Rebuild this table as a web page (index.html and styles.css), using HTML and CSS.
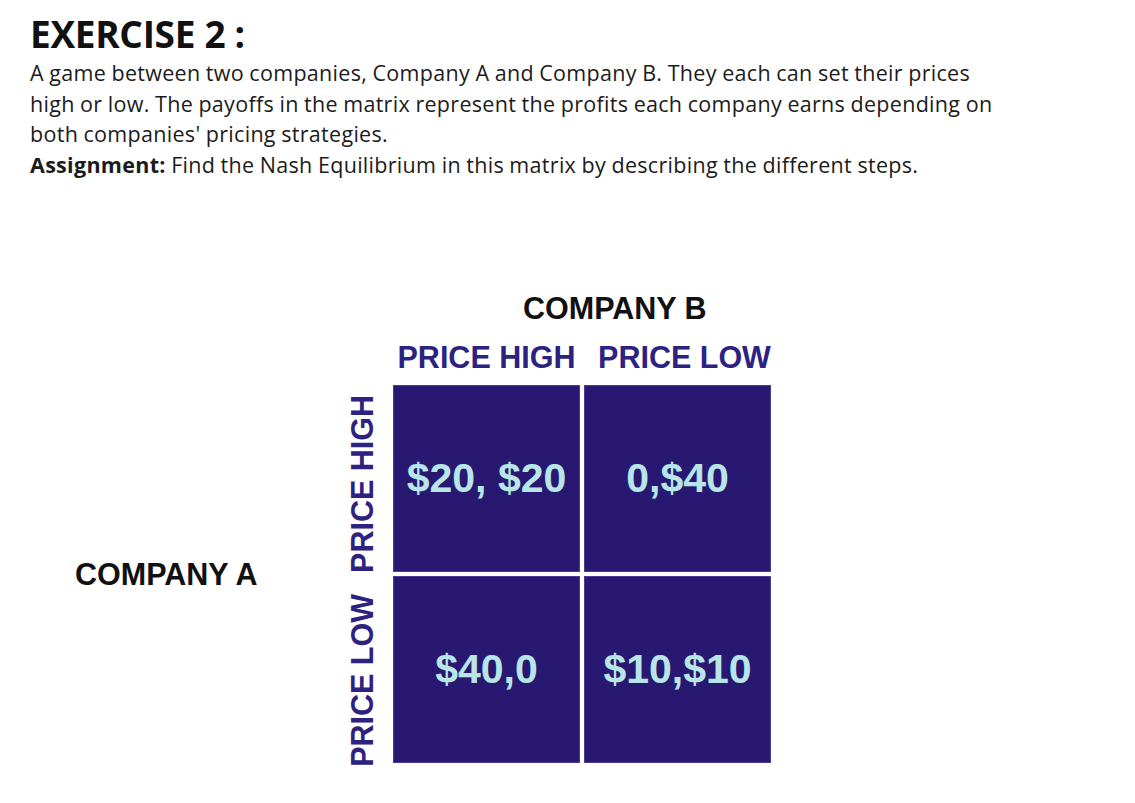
FILE: index.html
```html
<!DOCTYPE html>
<html lang="en">
<head>
<meta charset="utf-8">
<title>Exercise 2</title>
<link rel="stylesheet" href="styles.css">
</head>
<body>
<main class="page">
  <section class="intro">
    <h1 class="title">EXERCISE 2 :</h1>
    <p class="text">A game between two companies, Company A and Company B. They each can set their prices<br>high or low. The payoffs in the matrix represent the profits each company earns depending on<br>both companies' pricing strategies.<br><b>Assignment:</b> Find the Nash Equilibrium in this matrix by describing the different steps.</p>
  </section>

  <section class="game">
    <div class="player-b">COMPANY B</div>
    <div class="col-heads">
      <div class="col-head">PRICE HIGH</div>
      <div class="col-head">PRICE LOW</div>
    </div>
    <div class="player-a">COMPANY A</div>
    <div class="row-heads">
      <div class="row-head row-head-high"><span>PRICE HIGH</span></div>
      <div class="row-head row-head-low"><span>PRICE LOW</span></div>
    </div>
    <div class="matrix">
      <div class="cell">$20, $20</div>
      <div class="cell">0,$40</div>
      <div class="cell">$40,0</div>
      <div class="cell">$10,$10</div>
    </div>
  </section>
</main>
</body>
</html>
```

FILE: styles.css
```css
html, body {
  margin: 0;
  padding: 0;
  background: #ffffff;
}

.page {
  width: 1135px;
  height: 803px;
  overflow: hidden;
}

.intro {
  padding: 12px 0 0 30px;
  color: #1b1b1b;
  font-family: "Open Sans", "Noto Sans", sans-serif;
}

.title {
  margin: 0;
  font-size: 37px;
  line-height: 44px;
  font-weight: 700;
  letter-spacing: -0.3px;
  color: #111;
}

.text {
  margin: 2px 0 0;
  font-size: 21.5px;
  line-height: 30.5px;
  letter-spacing: 0.3px;
  word-spacing: -0.5px;
}

.text b {
  font-weight: 700;
}

.game {
  display: grid;
  grid-template-columns: 268px 50px 378px;
  grid-template-rows: 44px 55px 378px;
  margin: 106px 0 0 75px;
  font-family: "Liberation Sans", Arial, sans-serif;
  font-weight: 700;
}

.player-b {
  grid-column: 3;
  grid-row: 1;
  font-size: 30.5px;
  line-height: 44px;
  color: #111;
  padding-left: 130px;
  white-space: nowrap;
}

.col-heads {
  grid-column: 3;
  grid-row: 2;
  display: grid;
  grid-template-columns: 187px 187px;
  column-gap: 4px;
  align-items: center;
  padding-bottom: 2px;
}

.col-head {
  font-size: 30.5px;
  line-height: 40px;
  color: #2d2280;
  text-align: center;
  white-space: nowrap;
}

.col-head + .col-head {
  padding-left: 14px;
}

.player-a {
  grid-column: 1;
  grid-row: 3;
  align-self: center;
  font-size: 30.5px;
  line-height: 40px;
  color: #111;
  white-space: nowrap;
}

.row-heads {
  grid-column: 2;
  grid-row: 3;
  display: grid;
  grid-template-rows: 187px 187px;
  row-gap: 4px;
  padding-right: 12px;
}

.row-head {
  display: flex;
  align-items: center;
  justify-content: center;
}

.row-head-high {
  padding-top: 10px;
}

.row-head-low {
  padding-top: 22px;
}

.row-head span {
  writing-mode: vertical-rl;
  transform: rotate(180deg);
  font-size: 30.5px;
  line-height: 36px;
  color: #2d2280;
  white-space: nowrap;
}

.matrix {
  grid-column: 3;
  grid-row: 3;
  display: grid;
  grid-template-columns: 187px 187px;
  grid-template-rows: 187px 187px;
  gap: 4px;
  background: #ffffff;
}

.cell {
  background: #291872;
  box-shadow: inset 0 0 0 1px #4a3c98;
  color: #b8e6e8;
  font-size: 41px;
  display: flex;
  align-items: center;
  justify-content: center;
  white-space: nowrap;
}
```
